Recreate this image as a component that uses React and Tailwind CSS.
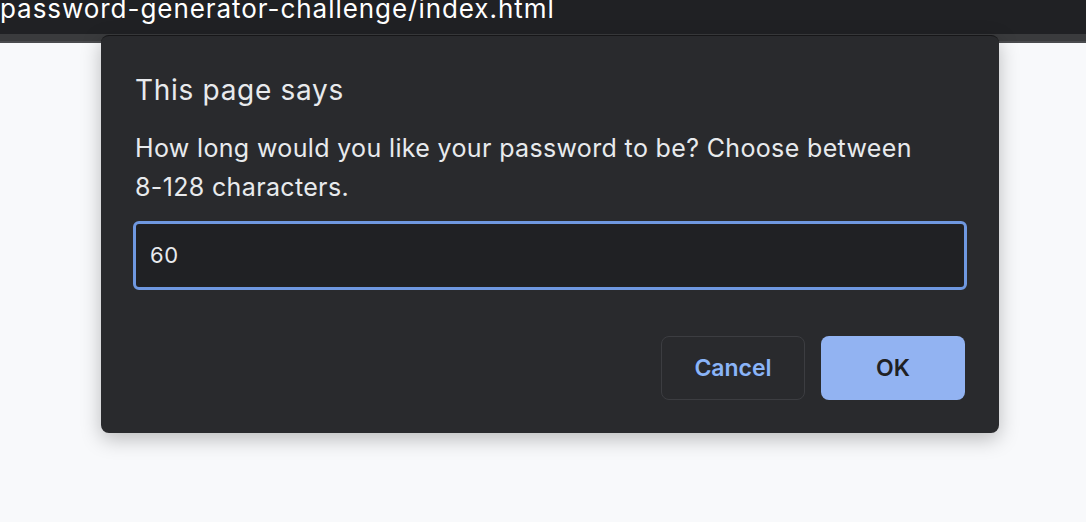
export default function App() {
  return (
    <div
      className="relative w-[1086px] h-[522px] overflow-hidden bg-[#f8f9fb]"
      style={{ fontFamily: "Inter, 'Noto Sans', sans-serif" }}
    >
      {/* Browser chrome */}
      <div className="h-[34px] bg-[#202124] overflow-hidden">
        <div className="text-[26px] leading-[26px] text-white -mt-[4px] whitespace-nowrap tracking-[0.95px]">
          password-generator-challenge/index.html
        </div>
      </div>
      <div className="h-[9px] bg-[#3a3b3d] border-b-2 border-[#4a4b4e]" />

      {/* Prompt dialog */}
      <div className="absolute left-[101px] top-[35px] w-[898px] h-[398px] bg-[#292a2d] rounded-[8px] border-t border-[#161618] shadow-[0_6px_20px_rgba(0,0,0,0.25)] px-[34px] pt-[37px] text-[#e8eaed]">
        <h1 className="text-[28px] leading-[34px] tracking-[0.7px]">This page says</h1>
        <p className="mt-[22px] text-[25px] leading-[39px] w-[800px] tracking-[0.35px]">
          How long would you like your password to be? Choose between 8-128 characters.
        </p>
        <div className="mt-[14px] h-[69px] w-[834px] -ml-[2px] rounded-[6px] border-[3px] border-[#6f98e0] bg-[#202124] flex items-center px-[14px] text-[22px] tracking-[0.5px]">
          60
        </div>
        <div className="mt-[46px] flex justify-end gap-[16px]">
          <button className="w-[144px] h-[64px] rounded-[8px] border border-[#3c3d41] text-[#8ab4f8] text-[23px] font-semibold">
            Cancel
          </button>
          <button className="w-[144px] h-[64px] rounded-[8px] bg-[#92b3f2] text-[#202124] text-[23px] font-semibold">
            OK
          </button>
        </div>
      </div>
    </div>
  );
}
